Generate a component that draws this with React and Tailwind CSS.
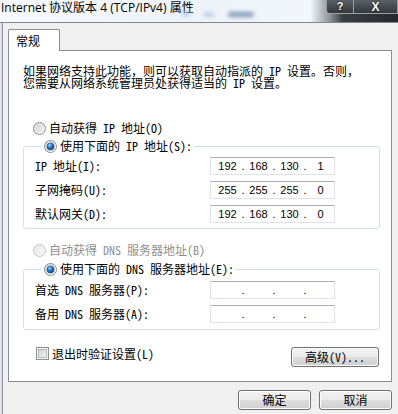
import React from "react";

const cjk = "font-['Noto_Sans_Mono_CJK_SC','Noto_Sans_CJK_SC',sans-serif]";
const ui = "font-['Noto_Sans_CJK_SC',sans-serif]";

function Radio({ checked, disabled }) {
  return (
    <svg width="13" height="13" viewBox="0 0 13 13" className="shrink-0">
      <defs>
        <linearGradient id="rfill" x1="0" y1="0" x2="1" y2="1">
          <stop offset="0" stopColor="#cbcbcb" />
          <stop offset="1" stopColor="#f7f7f7" />
        </linearGradient>
        <linearGradient id="rdis" x1="0" y1="0" x2="1" y2="1">
          <stop offset="0" stopColor="#e6e6e6" />
          <stop offset="1" stopColor="#f8f8f8" />
        </linearGradient>
        <radialGradient id="rdot" cx="0.38" cy="0.32" r="0.7">
          <stop offset="0" stopColor="#9fd3ff" />
          <stop offset="0.45" stopColor="#2b7fd0" />
          <stop offset="1" stopColor="#0b3f78" />
        </radialGradient>
      </defs>
      <circle cx="6.5" cy="6.5" r="6" fill={disabled ? "url(#rdis)" : "url(#rfill)"} stroke={disabled ? "#c4c4c4" : "#8c8e90"} strokeWidth="1" />
      <circle cx="6.5" cy="6.5" r="4.6" fill="none" stroke={disabled ? "#f4f4f4" : "#eeeeee"} strokeWidth="0.8" />
      {checked && <circle cx="6.5" cy="6.5" r="3.6" fill="url(#rdot)" stroke="#1c4e84" strokeWidth="0.6" />}
    </svg>
  );
}

function Checkbox() {
  return (
    <svg width="13" height="13" viewBox="0 0 13 13" className="shrink-0">
      <defs>
        <linearGradient id="cfill" x1="0" y1="0" x2="1" y2="1">
          <stop offset="0" stopColor="#cfcfcf" />
          <stop offset="1" stopColor="#f8f8f8" />
        </linearGradient>
      </defs>
      <rect x="0.5" y="0.5" width="12" height="12" fill="#f4f4f4" stroke="#8e8f8f" />
      <rect x="2.5" y="2.5" width="8" height="8" fill="url(#cfill)" stroke="#b9babb" strokeWidth="1" />
    </svg>
  );
}

function IpField({ parts }) {
  const p = parts || ["", "", "", ""];
  return (
    <div className="w-[125px] h-[18px] bg-white border border-[#e2e3ea] border-t-[#abadb3] flex items-center pl-[3px] font-['Liberation_Sans',sans-serif] text-[11px] text-black">
      <span className="w-[27px] text-center">{p[0]}</span>
      <span className="w-[4px] text-center">.</span>
      <span className="w-[27px] text-center">{p[1]}</span>
      <span className="w-[4px] text-center">.</span>
      <span className="w-[27px] text-center">{p[2]}</span>
      <span className="w-[4px] text-center">.</span>
      <span className="w-[27px] text-center">{p[3]}</span>
    </div>
  );
}

function Row({ label, parts }) {
  return (
    <div className="flex items-center h-[18px]">
      <span className="w-[175px] leading-[12px]">{label}</span>
      <IpField parts={parts} />
    </div>
  );
}

function Button({ children, className }) {
  return (
    <div className={"h-[20px] rounded-[3px] border border-[#707070] bg-[linear-gradient(#f2f2f2_0%,#ebebeb_48%,#dddddd_52%,#cfcfcf_100%)] shadow-[inset_0_0_0_1px_#fcfcfc] flex items-center justify-center text-[12px] leading-[12px] text-black " + className}>
      {children}
    </div>
  );
}

export default function App() {
  return (
    <div className={"w-[398px] h-[414px] overflow-hidden bg-[#f0f0f0] text-[12px] text-black " + cjk}>
      {/* title bar */}
      <div className="h-[23px] flex items-start border-b border-[#7f8891] bg-[linear-gradient(to_right,#f6f9fc_0%,#eef3f9_50%,#f3f7fb_78%,#8a9096_83%,#3a3e43_86%,#26292d_100%)]">
        <span className="pl-[1px] pt-[1px] text-[12px] leading-[14px] text-black font-['Open_Sans','Noto_Sans_CJK_SC',sans-serif] whitespace-nowrap">
          Internet 协议版本 4 (TCP/IPv4) 属性
        </span>
        <div className="flex-1 flex items-start">
          <span className="mt-[12px] ml-[-12px] w-[8px] h-[4px] rounded-full bg-[#a9c4e2] blur-[2px]" />
          <span className="mt-[13px] ml-[14px] w-[10px] h-[3px] rounded-full bg-[#9db8d8] blur-[2px]" />
          <span className="mt-[12px] ml-[14px] w-[26px] h-[5px] rounded-full bg-[#7d98ba] blur-[2px]" />
        </div>
        <div className="flex h-[14px]">
          <div className="w-[28px] h-[14px] rounded-bl-[4px] border border-t-0 border-[#9aa0a6] bg-[linear-gradient(#5b6067,#34383d)] flex items-center justify-center text-white font-['Liberation_Sans',sans-serif] font-bold text-[11px] leading-[11px] [text-shadow:0_0_2px_#000]">
            ?
          </div>
          <div className="w-[44px] h-[14px] border border-t-0 border-l-0 border-[#9aa0a6] bg-[linear-gradient(#5b6067,#34383d)] flex items-center justify-center text-white font-['Liberation_Sans',sans-serif] font-bold text-[12px] leading-[12px] [text-shadow:0_0_2px_#000]">
            X
          </div>
        </div>
      </div>

      {/* body */}
      <div className="flex h-[391px] bg-[#dde4ec] pl-[2px]">
        <div className="flex-1 bg-[#f0f0f0] border-l border-[#8d9196] pl-[5px] pr-[6px]">
          {/* tab */}
          <div className="mt-[6px] relative z-10 -mb-px w-[52px] h-[22px] bg-white border border-b-0 border-[#898c95] rounded-t-[2px] pl-[7px] pt-[4px] text-[12px] leading-[14px] font-['Noto_Sans_CJK_SC',sans-serif]">
            常规
          </div>
          {/* panel */}
          <div className="h-[332px] bg-white border border-[#898c95] flex flex-col">
            <p className="pl-[14px] pt-[14px] leading-[12px] text-[12px]">
              如果网络支持此功能，则可以获取自动指派的 IP 设置。否则，
              <br />
              您需要从网络系统管理员处获得适当的 IP 设置。
            </p>

            <div className="mt-[31px] ml-[24px] h-[16px] flex items-center">
              <Radio />
              <span className="ml-[3px] leading-[12px]">自动获得 IP 地址(O)</span>
            </div>

            <fieldset className="mt-[2px] ml-[14px] mr-[11px] border border-[#d5dfe5] rounded-[3px] pb-[5px] pl-[11px]">
              <legend className="ml-[7px] px-[2px] h-[16px] flex items-center">
                <Radio checked />
                <span className="ml-[3px] leading-[12px]">使用下面的 IP 地址(S):</span>
              </legend>
              <div className="mt-[3px] flex flex-col gap-[6px]">
                <Row label="IP 地址(I):" parts={["192", "168", "130", "1"]} />
                <Row label="子网掩码(U):" parts={["255", "255", "255", "0"]} />
                <Row label="默认网关(D):" parts={["192", "168", "130", "0"]} />
              </div>
            </fieldset>

            <div className="mt-[13px] ml-[24px] h-[16px] flex items-center text-[#8f8f8f]">
              <Radio disabled />
              <span className="ml-[3px] leading-[12px]">自动获得 DNS 服务器地址(B)</span>
            </div>

            <fieldset className="mt-[3px] ml-[14px] mr-[11px] border border-[#d5dfe5] rounded-[3px] pb-[6px] pl-[11px]">
              <legend className="ml-[7px] px-[2px] h-[16px] flex items-center">
                <Radio checked />
                <span className="ml-[3px] leading-[12px]">使用下面的 DNS 服务器地址(E):</span>
              </legend>
              <div className="mt-[4px] flex flex-col gap-[6px]">
                <Row label="首选 DNS 服务器(P):" />
                <Row label="备用 DNS 服务器(A):" />
              </div>
            </fieldset>

            <div className="mt-[17px] ml-[27px] mr-[12px] flex items-start justify-between">
              <div className="flex items-center h-[13px]">
                <Checkbox />
                <span className="ml-[3px] leading-[12px]">退出时验证设置(L)</span>
              </div>
              <Button className="w-[88px]">高级(V)...</Button>
            </div>
          </div>

          {/* dialog buttons */}
          <div className="mt-[8px] flex justify-end gap-[8px]">
            <Button className={"w-[73px] " + ui}>确定</Button>
            <Button className={"w-[73px] " + ui}>取消</Button>
          </div>
        </div>
      </div>
    </div>
  );
}
